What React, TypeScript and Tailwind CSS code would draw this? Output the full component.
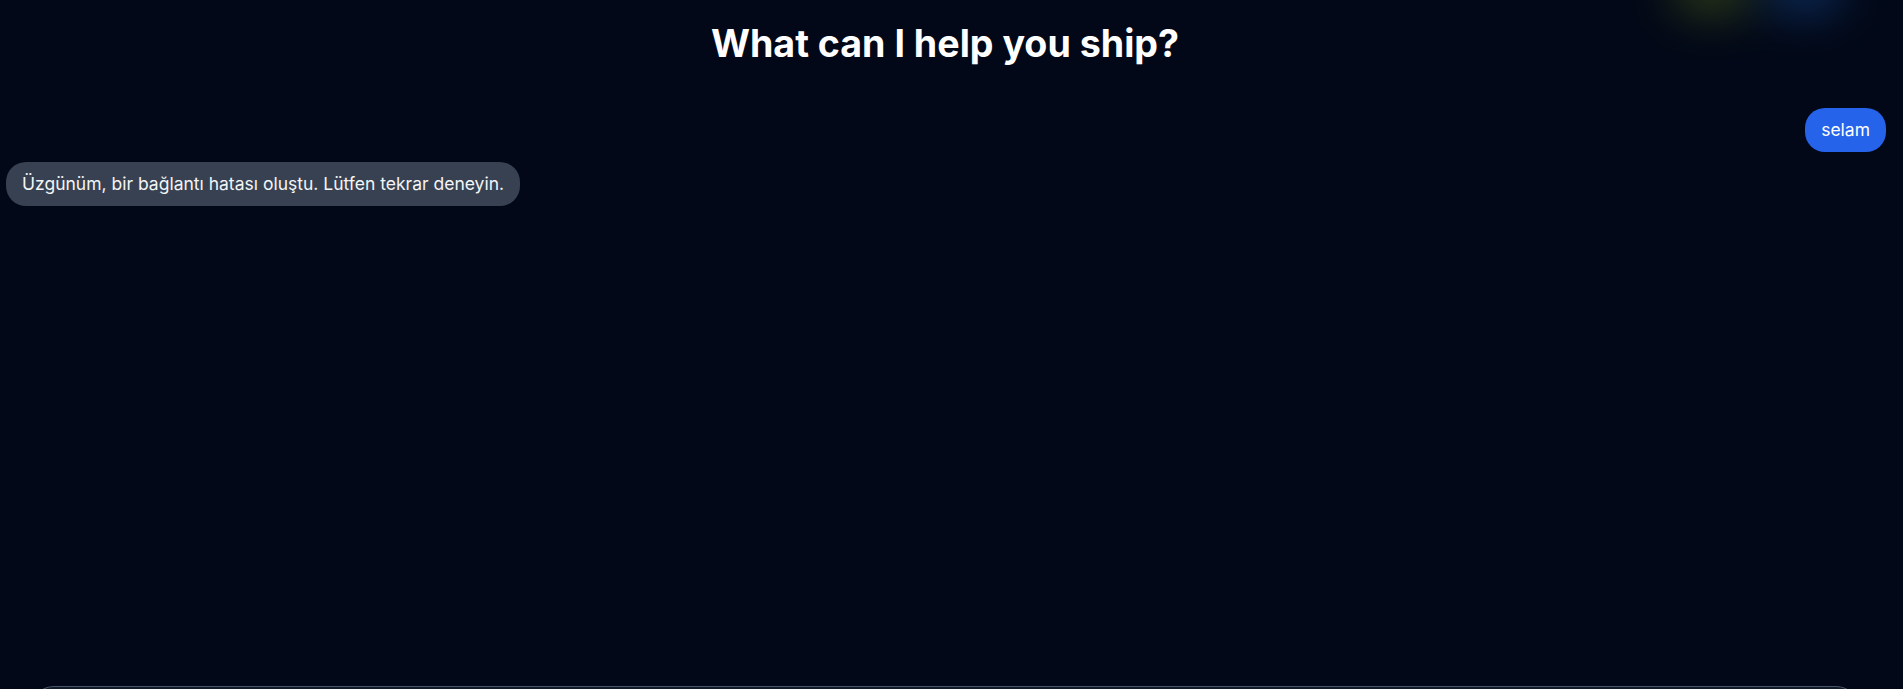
import React from "react";

interface Message {
  id: number;
  role: "user" | "assistant";
  text: string;
}

const messages: Message[] = [
  { id: 1, role: "user", text: "selam" },
  { id: 2, role: "assistant", text: "Üzgünüm, bir bağlantı hatası oluştu. Lütfen tekrar deneyin." },
];

const App: React.FC = () => {
  return (
    <div
      className="relative h-screen overflow-hidden bg-[#020817] text-white"
      style={{ fontFamily: "Inter, 'Noto Sans', sans-serif" }}
    >
      {/* top-right glow */}
      <div className="pointer-events-none absolute -top-9 right-[60px] flex h-12 w-[170px] gap-4 blur-xl opacity-45">
        <div className="h-full w-1/2 rounded-full bg-[#6a861c]" />
        <div className="h-full w-1/2 rounded-full bg-[#1d5fb8]" />
      </div>

      <div className="mr-[13px]">
        <header className="pt-6 text-center">
          <h1 className="text-[37.6px] font-bold leading-10">What can I help you ship?</h1>
        </header>

        <main className="flex h-[622px] flex-col gap-2.5 pl-1.5 pr-1 pt-11">
          {messages.map((m) =>
            m.role === "user" ? (
              <div key={m.id} className="flex justify-end">
                <div className="rounded-[20px] bg-[#2563eb] px-4 py-2.5 text-[17.5px] leading-6">{m.text}</div>
              </div>
            ) : (
              <div key={m.id} className="flex justify-start">
                <div className="rounded-[20px] bg-[#374151] px-4 py-2.5 text-[17.5px] leading-6 text-gray-100">
                  {m.text}
                </div>
              </div>
            )
          )}
        </main>

        <footer className="mx-[30px]">
          <div className="h-28 rounded-3xl border border-[#475569] bg-[#111827]" />
        </footer>
      </div>
    </div>
  );
};

export default App;
